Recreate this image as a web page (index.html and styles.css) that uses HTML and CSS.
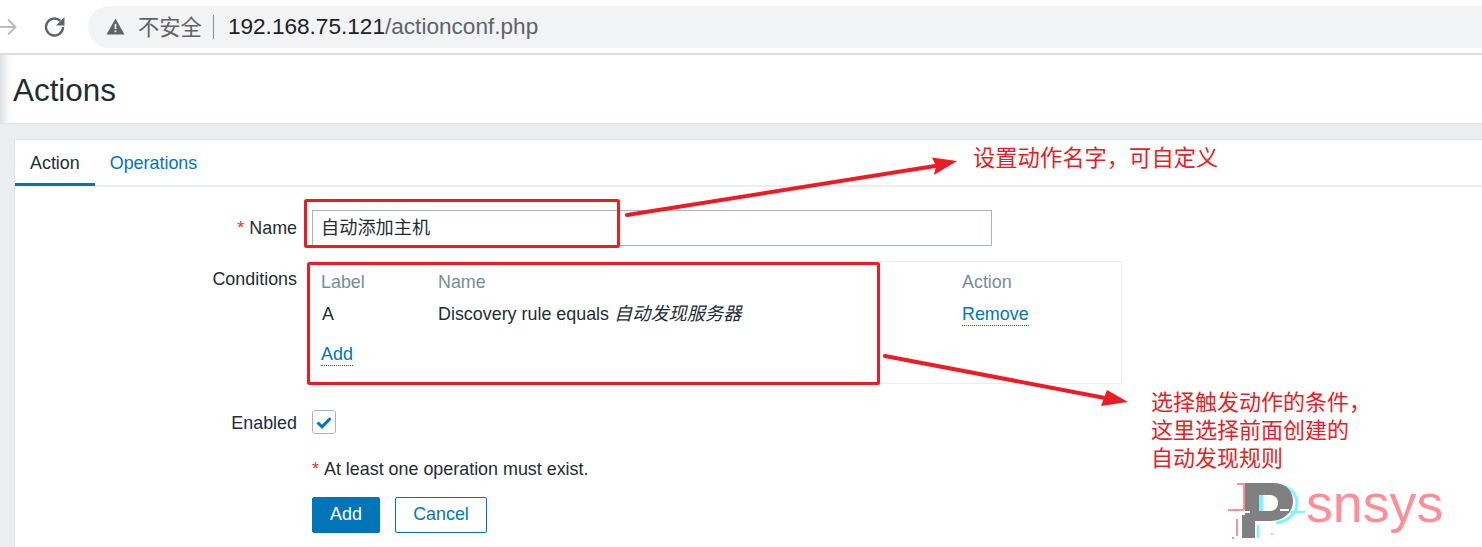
FILE: index.html
```html
<!DOCTYPE html>
<html lang="zh">
<head>
<meta charset="utf-8">
<title>Actions</title>
<link rel="stylesheet" href="styles.css">
</head>
<body>
<div class="chrome">
  <svg class="nav-forward" width="18" height="20" viewBox="0 0 18 20"><path d="M-2 10H15M8 2.500L15.500 10L8 17.500" fill="none" stroke="#b9bbbe" stroke-width="2"/></svg>
  <svg class="nav-reload" width="24" height="24" viewBox="0 0 24 24"><path d="M20 12a8.500 8.500 0 1 1-2.600-6.100" fill="none" stroke="#5f6368" stroke-width="2.400"/><path d="M21.500 2v8.500H13z" fill="#5f6368"/></svg>
  <div class="omnibox">
    <svg class="warn" width="19" height="17" viewBox="0 0 18 16"><path d="M9 0.500L17.500 15.500H0.500z" fill="#5f6368"/><rect x="8.200" y="5.500" width="1.600" height="5" fill="#f1f3f4"/><rect x="8.200" y="11.700" width="1.600" height="1.700" fill="#f1f3f4"/></svg>
    <span class="insecure">不安全</span>
    <span class="sep"></span>
    <span class="url"><span class="host">192.168.75.121</span>/actionconf.php</span>
  </div>
</div>
<div class="page">
  <header class="head"><h1>Actions</h1></header>
  <main class="band">
    <section class="card">
      <nav class="tabs">
        <span class="tab active">Action</span>
        <span class="tab">Operations</span>
      </nav>
      <form class="form">
        <div class="row row-name">
          <label class="lbl"><span class="req">*</span> Name</label>
          <div class="input">自动添加主机</div>
        </div>
        <div class="row row-cond">
          <label class="lbl lbl-cond">Conditions</label>
          <div class="cond">
            <div class="cond-grid cond-head">
              <span>Label</span><span>Name</span><span>Action</span>
            </div>
            <div class="cond-grid cond-row">
              <span class="cell-a">A</span>
              <span>Discovery rule equals <em>自动发现服务器</em></span>
              <span><a class="link">Remove</a></span>
            </div>
            <div class="cond-add"><a class="link">Add</a></div>
          </div>
        </div>
        <div class="row row-enabled">
          <label class="lbl lbl-enabled">Enabled</label>
          <span class="check"><svg width="18" height="15" viewBox="0 0 16 14"><path d="M2 7L6.200 11L14 3" fill="none" stroke="#0275b8" stroke-width="2.800"/></svg></span>
        </div>
        <p class="note"><span class="req req-note">*</span> At least one operation must exist.</p>
        <div class="actions">
          <span class="btn primary">Add</span>
          <span class="btn secondary">Cancel</span>
        </div>
      </form>
    </section>
  </main>
</div>

<svg class="marks" width="1482" height="547" viewBox="0 0 1482 547">
  <rect x="305.500" y="200.500" width="313" height="46" rx="1" class="box"/>
  <rect x="308.500" y="263.500" width="570" height="120" rx="1" class="box"/>
  <path d="M627 215L935 166" class="line"/>
  <path d="M957 161L932 157.500L936 166L934 175z" class="head-fill"/>
  <path d="M885 356L1105 398" class="line"/>
  <path d="M1128 402L1107 390L1104 398L1101 406z" class="head-fill"/>
</svg>
<div class="note-a">设置动作名字，可自定义</div>
<div class="note-b">选择触发动作的条件，<br>这里选择前面创建的<br>自动发现规则</div>
<div class="logo">
  <svg width="80" height="58" viewBox="0 0 80 58">
    <path d="M9 2H16V28M0 28H16M9 37V54" fill="none" stroke="#ff8f96" stroke-width="2"/>
    <rect x="4" y="55" width="2" height="2" fill="#ff8f96"/>
    <path d="M50 3C62 5 69 12 69 21C69 32 60 39 48 41" fill="none" stroke="#7ff3ff" stroke-width="3"/>
    <path d="M33 13V29" stroke="#7ff3ff" stroke-width="4"/>
    <path d="M30 43V56" stroke="#7ff3ff" stroke-width="2.500"/>
    <path d="M60 30H77" stroke="#7ff3ff" stroke-width="2"/>
    <rect x="43" y="51" width="2" height="2" fill="#7ff3ff"/>
    <path d="M17 1H45C58 1 65 9 65 19C65 32 54 39 42 39H27V56H14V33H17zM31 13V29H41C47 29 50 26 50 21C50 16 47 13 41 13z" fill="#808080" fill-rule="evenodd"/>
    <path d="M9 30H22" stroke="#fff" stroke-width="2"/>
    <path d="M52 28H61" stroke="#fff" stroke-width="2"/>
  </svg>
  <span class="logo-text">snsys</span>
</div>
</body>
</html>
```

FILE: styles.css
```css
* { box-sizing: border-box; }
html, body { margin: 0; padding: 0; }
body {
  width: 1482px;
  height: 547px;
  overflow: hidden;
  position: relative;
  background: #fff;
  color: #1f2c33;
  font-family: "Liberation Sans", "Noto Sans CJK SC", sans-serif;
  font-size: 17.900px;
}

.chrome {
  height: 55px;
  display: flex;
  align-items: center;
  background: #fff;
  border-bottom: 2px solid #dadce0;
}
.nav-forward { flex: none; }
.nav-reload { margin-left: 25px; flex: none; }
.omnibox {
  flex: 1;
  margin-left: 21px;
  margin-right: -40px;
  height: 42px;
  border-radius: 21px;
  background: #f1f3f4;
  display: flex;
  align-items: center;
  padding-left: 18px;
}
.warn { flex: none; }
.insecure { margin: 0 0 3px 13px; font-size: 21.300px; color: #5f6368; }
.sep { width: 1px; height: 24px; background: #8b8e92; margin: 0 14px 0 11px; }
.url { font-size: 22.600px; color: #5f6368; }
.host { color: #202124; }

.page {
  position: relative;
  height: 492px;
  box-shadow: inset 12px 0 10px -8px #d5dadd;
}
.head {
  height: 69px;
  padding: 17px 0 0 13px;
  border-bottom: 1px solid #dfe4e7;
}
h1 { margin: 0; font-size: 31.400px; font-weight: 400; line-height: 38px; }
.band {
  height: 423px;
  background: #ebeef0;
  padding: 15px 0 0 14px;
}
.card {
  height: 408px;
  background: #fff;
  border: 1px solid #dfe4e7;
  border-right: 0;
  border-bottom: 0;
}
.tabs {
  display: flex;
  height: 47px;
  border-bottom: 2px solid #ebeef0;
}
.tab {
  padding: 0 15px;
  line-height: 46px;
  height: 46px;
  color: #0275b8;
}
.tab.active {
  color: #1f2c33;
  border-bottom: 3px solid #0275b8;
}
.form { padding-top: 23px; }
.row { display: flex; }
.lbl {
  width: 297px;
  flex: none;
  text-align: right;
  padding-right: 15px;
}
.req { color: #e33734; }
.req-note { margin-right: 1px; }
.row-name { align-items: center; height: 36px; }
.input {
  width: 680px;
  height: 36px;
  line-height: 35px;
  border: 1px solid #a9b6c0;
  padding-left: 8px;
  font-size: 18.200px;
}
.row-cond { margin-top: 15px; }
.lbl-cond { padding-top: 8px; }
.lbl-enabled { padding-top: 3px; }
.cond {
  margin-left: -4px;
  width: 814px;
  height: 123px;
  border: 1px solid #ebeef0;
  padding: 7px 0 0 12px;
}
.cond-grid {
  display: grid;
  grid-template-columns: 117px 524px auto;
}
.cond-head { color: #768d99; height: 27px; line-height: 27px; }
.cond-row { margin-top: 2px; line-height: 32px; height: 32px; }
.cell-a { padding-left: 1px; }
em { font-style: italic; font-size: 18.200px; }
.link {
  color: #0275b8;
  border-bottom: 1px dotted #0275b8;
  padding-bottom: 1px;
}
.cond-add { margin-top: 8px; line-height: 32px; }
.row-enabled { margin-top: 26px; align-items: center; height: 24px; }
.check {
  width: 24px;
  height: 24px;
  border: 1px solid #a9b6c0;
  border-radius: 3px;
  display: flex;
  align-items: center;
  justify-content: center;
}
.note { margin: 25px 0 0 297px; line-height: 20px; color: #1f2c33; }
.actions { margin: 18px 0 0 297px; display: flex; gap: 15px; }
.btn {
  height: 36px;
  line-height: 32px;
  border: 1px solid #0275b8;
  border-radius: 2px;
  text-align: center;
}
.primary { width: 68px; background: #0275b8; color: #fff; font-weight: 400; }
.secondary { width: 92px; color: #0275b8; background: #fff; }

.marks { position: absolute; left: 0; top: 0; pointer-events: none; }
.box { fill: none; stroke: #ed1c24; stroke-width: 3; }
.line { fill: none; stroke: #ed1c24; stroke-width: 4; stroke-linecap: round; }
.head-fill { fill: #ed1c24; }
.note-a, .note-b {
  position: absolute;
  color: #ed1c24;
  font-size: 22px;
  white-space: nowrap;
}
.note-a { left: 973px; top: 144px; line-height: 30px; font-size: 22.300px; }
.note-b { left: 1151px; top: 389px; line-height: 28px; }
.logo {
  position: absolute;
  left: 1228px;
  top: 482px;
  width: 230px;
  height: 60px;
}
.logo svg { position: absolute; left: 0; top: 0; }
.logo-text {
  position: absolute;
  left: 78px;
  top: -6px;
  font-size: 53.700px;
  line-height: 54px;
  color: #ff8f96;
}
```
